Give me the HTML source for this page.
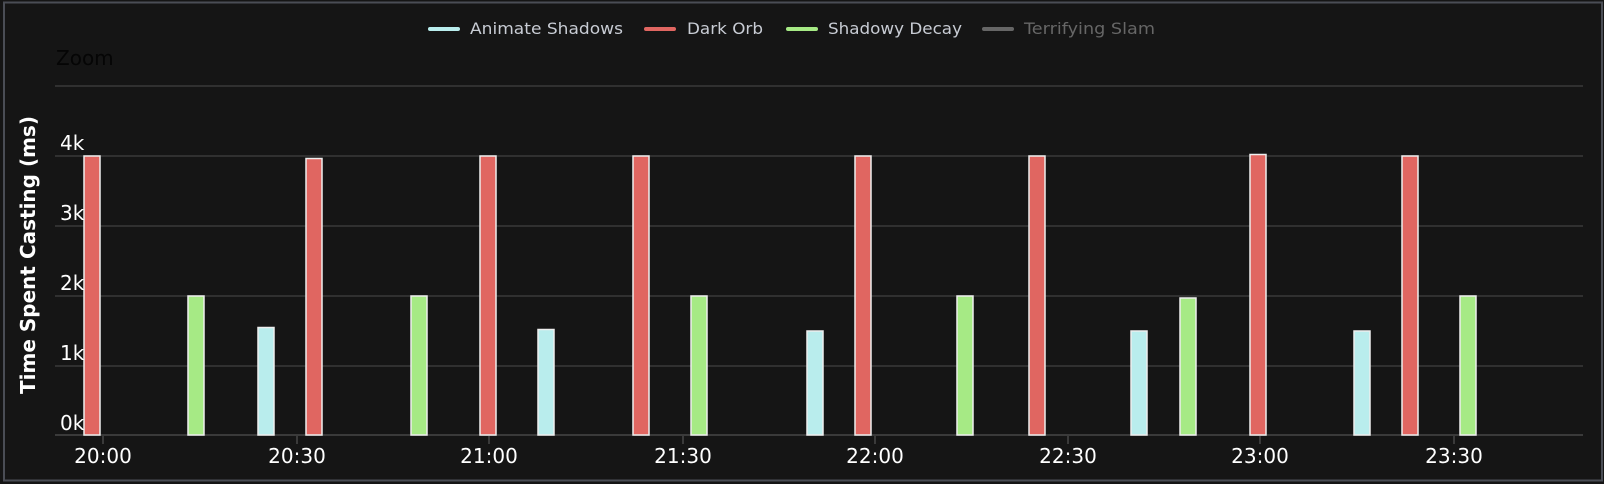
<!DOCTYPE html>
<html><head><meta charset="utf-8"><style>
html,body{margin:0;padding:0;background:#151515;width:1604px;height:484px;overflow:hidden}
svg{display:block}
text{font-family:"DejaVu Sans","Liberation Sans",sans-serif}
</style></head><body>
<svg width="1604" height="484" viewBox="0 0 1604 484" xmlns="http://www.w3.org/2000/svg">
<rect x="0" y="0" width="1604" height="484" fill="#151515"/>
<rect x="4" y="2.5" width="1598" height="478" fill="none" stroke="#4a4d55" stroke-width="2"/>
<!-- legend -->
<g font-size="16" fill="#c8ccd4">
<line x1="430" y1="29" x2="458" y2="29" stroke="#b9eded" stroke-width="4" stroke-linecap="round"/>
<text x="470" y="34" textLength="153" lengthAdjust="spacingAndGlyphs">Animate Shadows</text>
<line x1="646" y1="29" x2="674" y2="29" stroke="#e06661" stroke-width="4" stroke-linecap="round"/>
<text x="687" y="34" textLength="76" lengthAdjust="spacingAndGlyphs">Dark Orb</text>
<line x1="788" y1="29" x2="816" y2="29" stroke="#a6ea85" stroke-width="4" stroke-linecap="round"/>
<text x="828" y="34" textLength="134" lengthAdjust="spacingAndGlyphs">Shadowy Decay</text>
<line x1="984" y1="29" x2="1012" y2="29" stroke="#666" stroke-width="4" stroke-linecap="round"/>
<text x="1024" y="34" fill="#666" textLength="131" lengthAdjust="spacingAndGlyphs">Terrifying Slam</text>
</g>
<text x="56" y="65" font-size="20" fill="#050505">Zoom</text>
<!-- grid -->
<g stroke="#303030" stroke-width="2">
<line x1="55" y1="86" x2="1583" y2="86"/>
<line x1="55" y1="156" x2="1583" y2="156"/>
<line x1="55" y1="226" x2="1583" y2="226"/>
<line x1="55" y1="296" x2="1583" y2="296"/>
<line x1="55" y1="366" x2="1583" y2="366"/>
</g>
<line x1="55" y1="435" x2="1583" y2="435" stroke="#3a3a3a" stroke-width="2"/>
<g stroke="#3a3a3a" stroke-width="2">
<line x1="103" y1="435" x2="103" y2="444"/><line x1="297" y1="435" x2="297" y2="444"/>
<line x1="489" y1="435" x2="489" y2="444"/><line x1="683" y1="435" x2="683" y2="444"/>
<line x1="875" y1="435" x2="875" y2="444"/><line x1="1068" y1="435" x2="1068" y2="444"/>
<line x1="1260" y1="435" x2="1260" y2="444"/><line x1="1454" y1="435" x2="1454" y2="444"/>
</g>
<!-- bars -->
<g stroke="#eeeeee" stroke-width="1.5">
<g fill="#e06661">
<rect x="84" y="156" width="16" height="279"/>
<rect x="306" y="158.5" width="16" height="276.5"/>
<rect x="480" y="156" width="16" height="279"/>
<rect x="633" y="156" width="16" height="279"/>
<rect x="855" y="156" width="16" height="279"/>
<rect x="1029" y="156" width="16" height="279"/>
<rect x="1250" y="154.5" width="16" height="280.5"/>
<rect x="1402" y="156" width="16" height="279"/>
</g>
<g fill="#a6ea85">
<rect x="188" y="296" width="16" height="139"/>
<rect x="411" y="296" width="16" height="139"/>
<rect x="691" y="296" width="16" height="139"/>
<rect x="957" y="296" width="16" height="139"/>
<rect x="1180" y="298" width="16" height="137"/>
<rect x="1460" y="296" width="16" height="139"/>
</g>
<g fill="#b9eded">
<rect x="258" y="327.5" width="16" height="107.5"/>
<rect x="538" y="329.5" width="16" height="105.5"/>
<rect x="807" y="331" width="16" height="104"/>
<rect x="1131" y="331" width="16" height="104"/>
<rect x="1354" y="331" width="16" height="104"/>
</g>
</g>
<!-- y labels -->
<g font-size="20" fill="#ffffff">
<text x="60" y="150">4k</text>
<text x="60" y="220">3k</text>
<text x="60" y="290">2k</text>
<text x="60" y="360">1k</text>
<text x="60" y="430">0k</text>
</g>
<g font-size="20" fill="#ffffff" text-anchor="middle">
<text x="103" y="463">20:00</text><text x="297" y="463">20:30</text>
<text x="489" y="463">21:00</text><text x="683" y="463">21:30</text>
<text x="875" y="463">22:00</text><text x="1068" y="463">22:30</text>
<text x="1260" y="463">23:00</text><text x="1454" y="463">23:30</text>
</g>
<text transform="translate(35,255) rotate(-90)" text-anchor="middle" font-size="20" font-weight="bold" fill="#ffffff">Time Spent Casting (ms)</text>
</svg>
</body></html>
